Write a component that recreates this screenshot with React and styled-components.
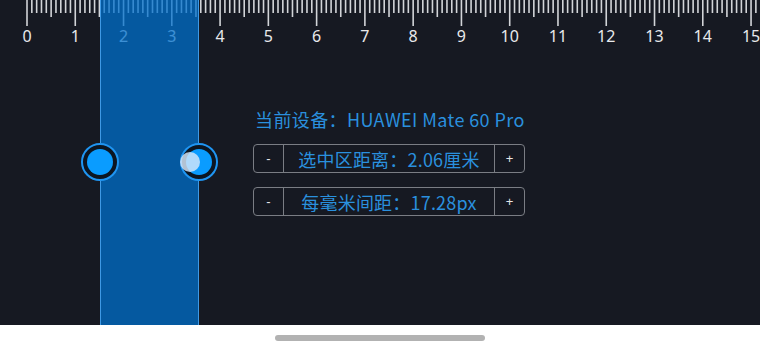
import React from "react";
import styled, { createGlobalStyle } from "styled-components";

const PX_PER_MM = 4.827;
const ORIGIN = 27;
const WIDTH = 760;

const GlobalStyle = createGlobalStyle`
  html, body {
    margin: 0;
    padding: 0;
    background: #ffffff;
  }
  body {
    font-family: "Noto Sans", "Noto Sans CJK SC", sans-serif;
  }
`;

const Screen = styled.div`
  width: 760px;
  height: 351px;
  display: flex;
  flex-direction: column;
  overflow: hidden;
`;

const RulerArea = styled.div`
  position: relative;
  height: 325px;
  background: #161922;
  display: flex;
  flex-direction: column;
`;

const Selection = styled.div`
  position: absolute;
  top: 0;
  bottom: 0;
  left: ${(p) => p.$left}px;
  width: ${(p) => p.$width}px;
  box-sizing: border-box;
  background: rgba(0, 112, 205, 0.74);
  border-left: 1px solid rgba(70, 160, 235, 0.9);
  border-right: 1px solid rgba(70, 160, 235, 0.9);
  pointer-events: none;
`;

const Handle = styled.div`
  position: absolute;
  top: ${(p) => p.$y - 19}px;
  left: ${(p) => p.$x - 19}px;
  width: 38px;
  height: 38px;
  box-sizing: border-box;
  border-radius: 50%;
  border: 2.5px solid #1f95f2;
  background: #0c1622;
  display: flex;
  align-items: center;
  justify-content: center;
`;

const Knob = styled.div`
  width: 26px;
  height: 26px;
  border-radius: 50%;
  background: #0a9cff;
`;

const Ripple = styled.div`
  position: absolute;
  top: ${(p) => p.$y - 10}px;
  left: ${(p) => p.$x - 10}px;
  width: 20px;
  height: 20px;
  border-radius: 50%;
  background: rgba(215, 232, 250, 0.82);
`;

const InfoPanel = styled.div`
  display: flex;
  flex-direction: column;
  align-items: flex-start;
  gap: 14px;
  margin: 57px 0 0 253px;
  width: 272px;
`;

const DeviceLabel = styled.div`
  font-family: "Noto Sans CJK SC", "Noto Sans", sans-serif;
  font-size: 18px;
  letter-spacing: 0.4px;
  line-height: 25px;
  color: #2a90de;
  padding-left: 2px;
  margin-bottom: -2px;
  white-space: nowrap;
`;

const Stepper = styled.div`
  display: flex;
  width: 272px;
  height: 29px;
  box-sizing: border-box;
  border: 1.5px solid #7a7d84;
  border-radius: 4px;
`;

const StepButton = styled.div`
  width: 29px;
  flex: none;
  display: flex;
  align-items: center;
  justify-content: center;
  color: #e6e6e6;
  font-family: "Liberation Sans", sans-serif;
  font-size: 13px;
  border-${(p) => (p.$side === "left" ? "right" : "left")}: 1.5px solid #7a7d84;
`;

const StepValue = styled.div`
  flex: 1;
  display: flex;
  align-items: center;
  justify-content: center;
  font-family: "Noto Sans CJK SC", "Noto Sans", sans-serif;
  font-size: 18px;
  letter-spacing: 0.2px;
  color: #2a90de;
  white-space: nowrap;
`;

const Footer = styled.div`
  flex: 1;
  background: #ffffff;
  display: flex;
  justify-content: center;
  align-items: center;
  padding-right: 1px;
`;

const HomeBar = styled.div`
  width: 210px;
  height: 6px;
  border-radius: 3px;
  background: #b2b2b2;
`;

function Ruler() {
  const ticks = [];
  const labels = [];
  for (let mm = 0; ORIGIN + mm * PX_PER_MM <= WIDTH; mm++) {
    const x = ORIGIN + mm * PX_PER_MM;
    const len = mm % 10 === 0 ? 26 : mm % 5 === 0 ? 17 : 13;
    ticks.push(
      <line key={mm} x1={x} y1={0} x2={x} y2={len} stroke="#d2d4d8" strokeWidth="1.6" />
    );
    if (mm % 10 === 0) {
      labels.push(
        <text
          key={"l" + mm}
          x={x}
          y={42}
          textAnchor="middle"
          fill="#e8e9ec"
          fontSize="16"
          fontFamily="Noto Sans, sans-serif"
        >
          {mm / 10}
        </text>
      );
    }
  }
  return (
    <svg width={WIDTH} height="50" style={{ display: "block" }}>
      {ticks}
      {labels}
    </svg>
  );
}

export default function App() {
  const startX = 100;
  const endX = 199;
  const handleY = 162;

  return (
    <>
      <GlobalStyle />
      <Screen>
        <RulerArea>
          <Ruler />
          <InfoPanel>
            <DeviceLabel>当前设备：HUAWEI Mate 60 Pro</DeviceLabel>
            <Stepper>
              <StepButton $side="left">-</StepButton>
              <StepValue>选中区距离：2.06厘米</StepValue>
              <StepButton $side="right">+</StepButton>
            </Stepper>
            <Stepper>
              <StepButton $side="left">-</StepButton>
              <StepValue>每毫米间距：17.28px</StepValue>
              <StepButton $side="right">+</StepButton>
            </Stepper>
          </InfoPanel>
          <Selection $left={startX} $width={endX - startX} />
          <Handle $x={startX} $y={handleY}>
            <Knob />
          </Handle>
          <Handle $x={endX} $y={handleY}>
            <Knob />
          </Handle>
          <Ripple $x={190} $y={handleY} />
        </RulerArea>
        <Footer>
          <HomeBar />
        </Footer>
      </Screen>
    </>
  );
}
